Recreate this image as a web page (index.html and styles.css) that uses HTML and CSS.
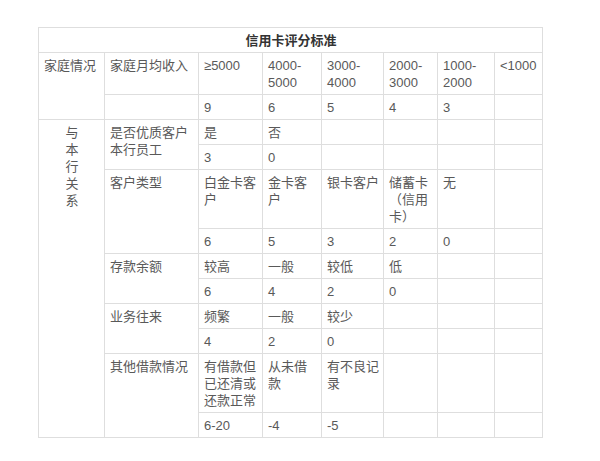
FILE: index.html
```html
<!DOCTYPE html>
<html lang="zh-CN">
<head>
<meta charset="utf-8">
<title>信用卡评分标准</title>
<link rel="stylesheet" href="styles.css">
</head>
<body>
<div class="page">
<table class="score">
<colgroup>
<col class="c1"><col class="c2"><col class="c3"><col class="c4"><col class="c5"><col class="c6"><col class="c7"><col class="c8">
</colgroup>
<tr><th colspan="8" class="title">信用卡评分标准</th></tr>
<tr><td rowspan="2">家庭情况</td><td>家庭月均收入</td><td>≥5000</td><td>4000-5000</td><td>3000-4000</td><td>2000-3000</td><td>1000-2000</td><td>&lt;1000</td></tr>
<tr><td></td><td>9</td><td>6</td><td>5</td><td>4</td><td>3</td><td></td></tr>
<tr><td rowspan="10" class="side"><span class="vert">与本行关系</span></td><td rowspan="2">是否优质客户本行员工</td><td>是</td><td>否</td><td></td><td></td><td></td><td></td></tr>
<tr><td>3</td><td>0</td><td></td><td></td><td></td><td></td></tr>
<tr><td rowspan="2">客户类型</td><td>白金卡客户</td><td>金卡客户</td><td>银卡客户</td><td>储蓄卡（信用卡）</td><td>无</td><td></td></tr>
<tr><td>6</td><td>5</td><td>3</td><td>2</td><td>0</td><td></td></tr>
<tr><td rowspan="2">存款余额</td><td>较高</td><td>一般</td><td>较低</td><td>低</td><td></td><td></td></tr>
<tr><td>6</td><td>4</td><td>2</td><td>0</td><td></td><td></td></tr>
<tr><td rowspan="2">业务往来</td><td>频繁</td><td>一般</td><td>较少</td><td></td><td></td><td></td></tr>
<tr><td>4</td><td>2</td><td>0</td><td></td><td></td><td></td></tr>
<tr><td rowspan="2">其他借款情况</td><td>有借款但已还清或还款正常</td><td>从未借款</td><td>有不良记录</td><td></td><td></td><td></td></tr>
<tr><td>6-20</td><td>-4</td><td>-5</td><td></td><td></td><td></td></tr>
</table>
</div>
</body>
</html>
```
FILE: styles.css
```css
html, body {
  margin: 0;
  padding: 0;
  background: #fff;
}
.page {
  padding: 27px 0 0 38px;
}
.score {
  border-collapse: collapse;
  table-layout: fixed;
  width: 505px;
  font-family: "Liberation Sans", "Noto Sans CJK SC", sans-serif;
  font-size: 13px;
  line-height: 17px;
  color: #595959;
}
.c1 { width: 66px; }
.c2 { width: 94px; }
.c3 { width: 64px; }
.c4 { width: 59px; }
.c5 { width: 62px; }
.c6 { width: 54px; }
.c7 { width: 57px; }
.c8 { width: 48px; }
.score th,
.score td {
  border: 1px solid #dedede;
  padding: 4px 4px 3px 5px;
  vertical-align: top;
  text-align: left;
}
.score th.title {
  text-align: center;
  font-weight: bold;
  color: #333;
}
.score td.side {
  text-align: center;
}
.vert {
  display: inline-block;
  width: 13px;
  word-break: break-all;
}
```
